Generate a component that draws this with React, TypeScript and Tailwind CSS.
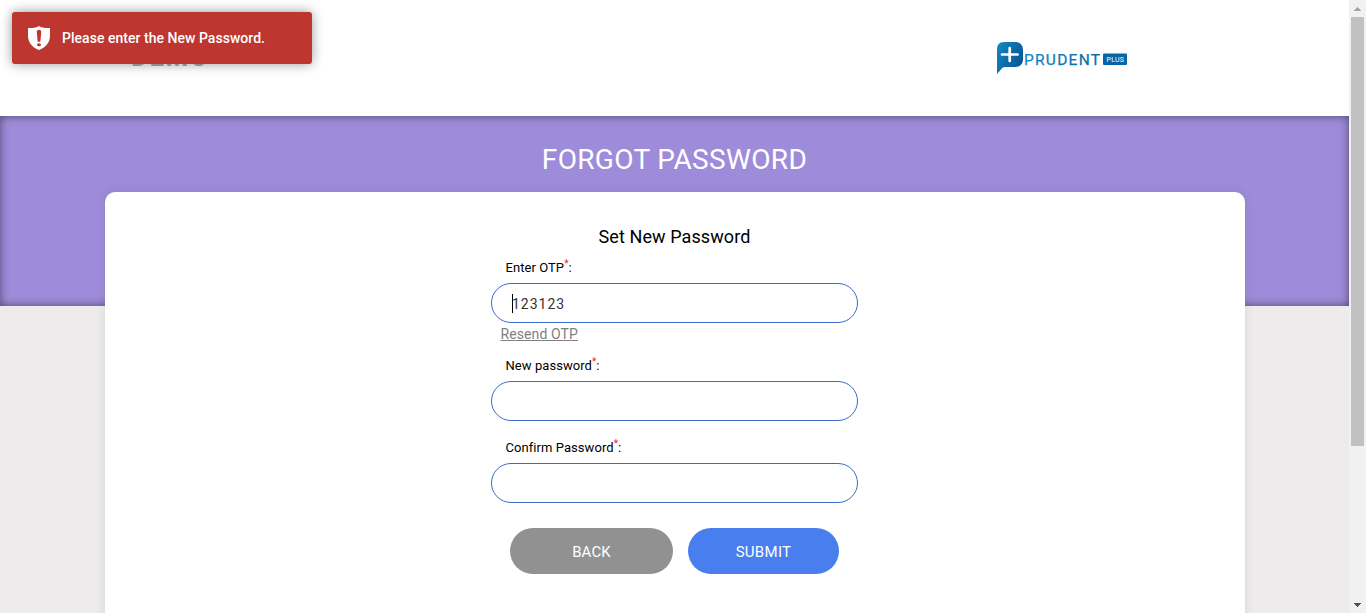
import type { ReactNode } from "react";

function Toast() {
  return (
    <div
      role="alert"
      className="absolute left-3 top-3 z-20 flex h-[52px] w-[300px] items-center rounded-[3px] bg-[#bd362f] pl-4 text-sm font-medium text-white shadow-[0_0_12px_#999999]"
    >
      <svg width="22" height="24" viewBox="0 0 22 24" className="shrink-0">
        <path
          fill="#fff"
          fillRule="evenodd"
          d="M11 0C8.500 1.700 4.500 2.400 0 2v8c0 6.500 4.500 11.500 11 14 6.500-2.500 11-7.500 11-14V2C17.500 2.400 13.500 1.700 11 0ZM11 3.800c1.700 0 2.400 1.100 2.200 3l-.7 7.500c-.1 1.100-.6 1.700-1.500 1.700s-1.400-.6-1.500-1.700l-.7-7.500c-.2-1.900.5-3 2.200-3ZM11 17.300a2 1.500 0 1 1 0 3 2 1.500 0 1 1 0-3Z"
        />
      </svg>
      <span className="ml-3 whitespace-nowrap tracking-[0.03px]">Please enter the New Password.</span>
    </div>
  );
}

function PrudentLogo() {
  return (
    <svg width="132" height="34" viewBox="0 0 132 34" role="img" aria-label="Prudent Plus">
      <defs>
        <linearGradient id="mark" x1="0" x2="1" y1="0" y2="0.6">
          <stop offset="0" stopColor="#1688c5" />
          <stop offset="1" stopColor="#035796" />
        </linearGradient>
        <linearGradient id="word" x1="0" x2="1" y1="0" y2="0">
          <stop offset="0" stopColor="#1687c5" />
          <stop offset="1" stopColor="#0866a6" />
        </linearGradient>
      </defs>
      <path
        fill="url(#mark)"
        d="M8 1h11c5 0 8 3 8 8v9c0 5-3 8-8 8H9c-2 0-2.500.7-4 2.500L1 33V9c0-5 2-8 7-8Z"
      />
      <path d="M13.700 7v13M6 13.500h15.600" stroke="#fff" strokeWidth="2.700" strokeLinecap="round" />
      <text
        x="28"
        y="24"
        textLength="76"
        fontSize="15.500"
        stroke="url(#word)"
        strokeWidth="0.25"
        fill="url(#word)"
        className="font-['Roboto',sans-serif]"
      >
        PRUDENT
      </text>
      <rect x="107" y="12.500" width="24" height="11.500" rx="1" fill="#0866a6" />
      <text
        x="110.500"
        y="20.800"
        textLength="17.500"
        fontSize="7"
        fill="#fff"
        className="font-['Roboto',sans-serif]"
      >
        PLUS
      </text>
    </svg>
  );
}

function Header() {
  return (
    <header className="flex h-[116px] shrink-0 justify-between bg-white">
      <div className="pl-[131px] pt-[41px] text-[26px] leading-8 font-bold tracking-[1.500px] text-[#888888]">
        DEMO
      </div>
      <div className="pr-[221px] pt-[41px]">
        <PrudentLogo />
      </div>
    </header>
  );
}

function Field({ label, children, className }: { label: string; children?: ReactNode; className?: string }) {
  return (
    <div className={className}>
      <div className="flex h-[15px] pl-[14.5px] text-[13px] leading-[15px] tracking-[0.06px] text-black">
        {label}
        <span className="relative -top-[4px] text-[10px] tracking-normal text-[#e8202a]">*</span>:
      </div>
      <div className="mt-2 flex h-10 items-center rounded-[20px] border border-[#3c6bc9] bg-white pl-5 text-sm tracking-[1px] text-[#333333]">
        {children}
      </div>
    </div>
  );
}

function Scrollbar() {
  return (
    <div className="flex w-[17px] shrink-0 flex-col items-center bg-[#f1f1f1]">
      <div className="flex h-[17px] items-center">
        <svg width="7" height="4" viewBox="0 0 7 4" shapeRendering="crispEdges">
          <path fill="#a3a3a3" d="M3 0h1v1h1v1h1v1h1v1H0V3h1V2h1V1h1Z" />
        </svg>
      </div>
      <div className="h-[429px] w-[13px] bg-[#c1c1c1]" />
      <div className="mt-auto flex h-[17px] items-center">
        <svg width="7" height="4" viewBox="0 0 7 4" shapeRendering="crispEdges">
          <path fill="#505050" d="M0 0h7v1H6v1H5v1H4v1H3V3H2V2H1V1H0Z" />
        </svg>
      </div>
    </div>
  );
}

export default function App() {
  return (
    <div className="relative flex h-[613px] w-[1366px] overflow-hidden bg-[#edebec] font-['Roboto',sans-serif]">
      <Toast />
      <main className="flex min-w-0 flex-1 flex-col overflow-hidden">
        <Header />
        <section className="h-[190px] shrink-0 bg-[#9e8cda] pt-[27px] shadow-[inset_0_0_10px_rgba(0,0,0,0.5)]">
          <h1 className="text-center text-[28px] leading-[34px] tracking-[0.35px] text-white">FORGOT PASSWORD</h1>
        </section>
        <section className="z-10 mx-auto -mt-[114px] h-[600px] w-[1140px] shrink-0 rounded-[10px] bg-white pt-[34px] shadow-[0_0_10px_rgba(0,0,0,0.1)]">
          <h2 className="text-center text-lg leading-[22px] tracking-[0.1px] text-black">Set New Password</h2>
          <form className="mx-auto mt-3 w-[367px]">
            <Field label="Enter OTP">
              <span className="h-[19px] w-px bg-black" />
              <span className="-ml-px pt-[2px]">123123</span>
            </Field>
            <a className="ml-[9.5px] mt-[3px] block h-[17px] w-fit text-sm leading-[17px] tracking-[0.1px] text-[#808080] underline">
              Resend OTP
            </a>
            <Field label="New password" className="mt-[15px]" />
            <Field label="Confirm Password" className="mt-[19px]" />
            <div className="mt-[25px] flex gap-[15px] pl-[19px] text-[15px] text-white">
              <button type="button" className="h-[46px] w-[163px] rounded-[23px] bg-[#919191] pt-[2px] tracking-[0.1px]">
                BACK
              </button>
              <button type="button" className="h-[46px] w-[151px] rounded-[23px] bg-[#487eed] pt-[2px] tracking-[0.3px]">
                SUBMIT
              </button>
            </div>
          </form>
        </section>
      </main>
      <Scrollbar />
    </div>
  );
}
